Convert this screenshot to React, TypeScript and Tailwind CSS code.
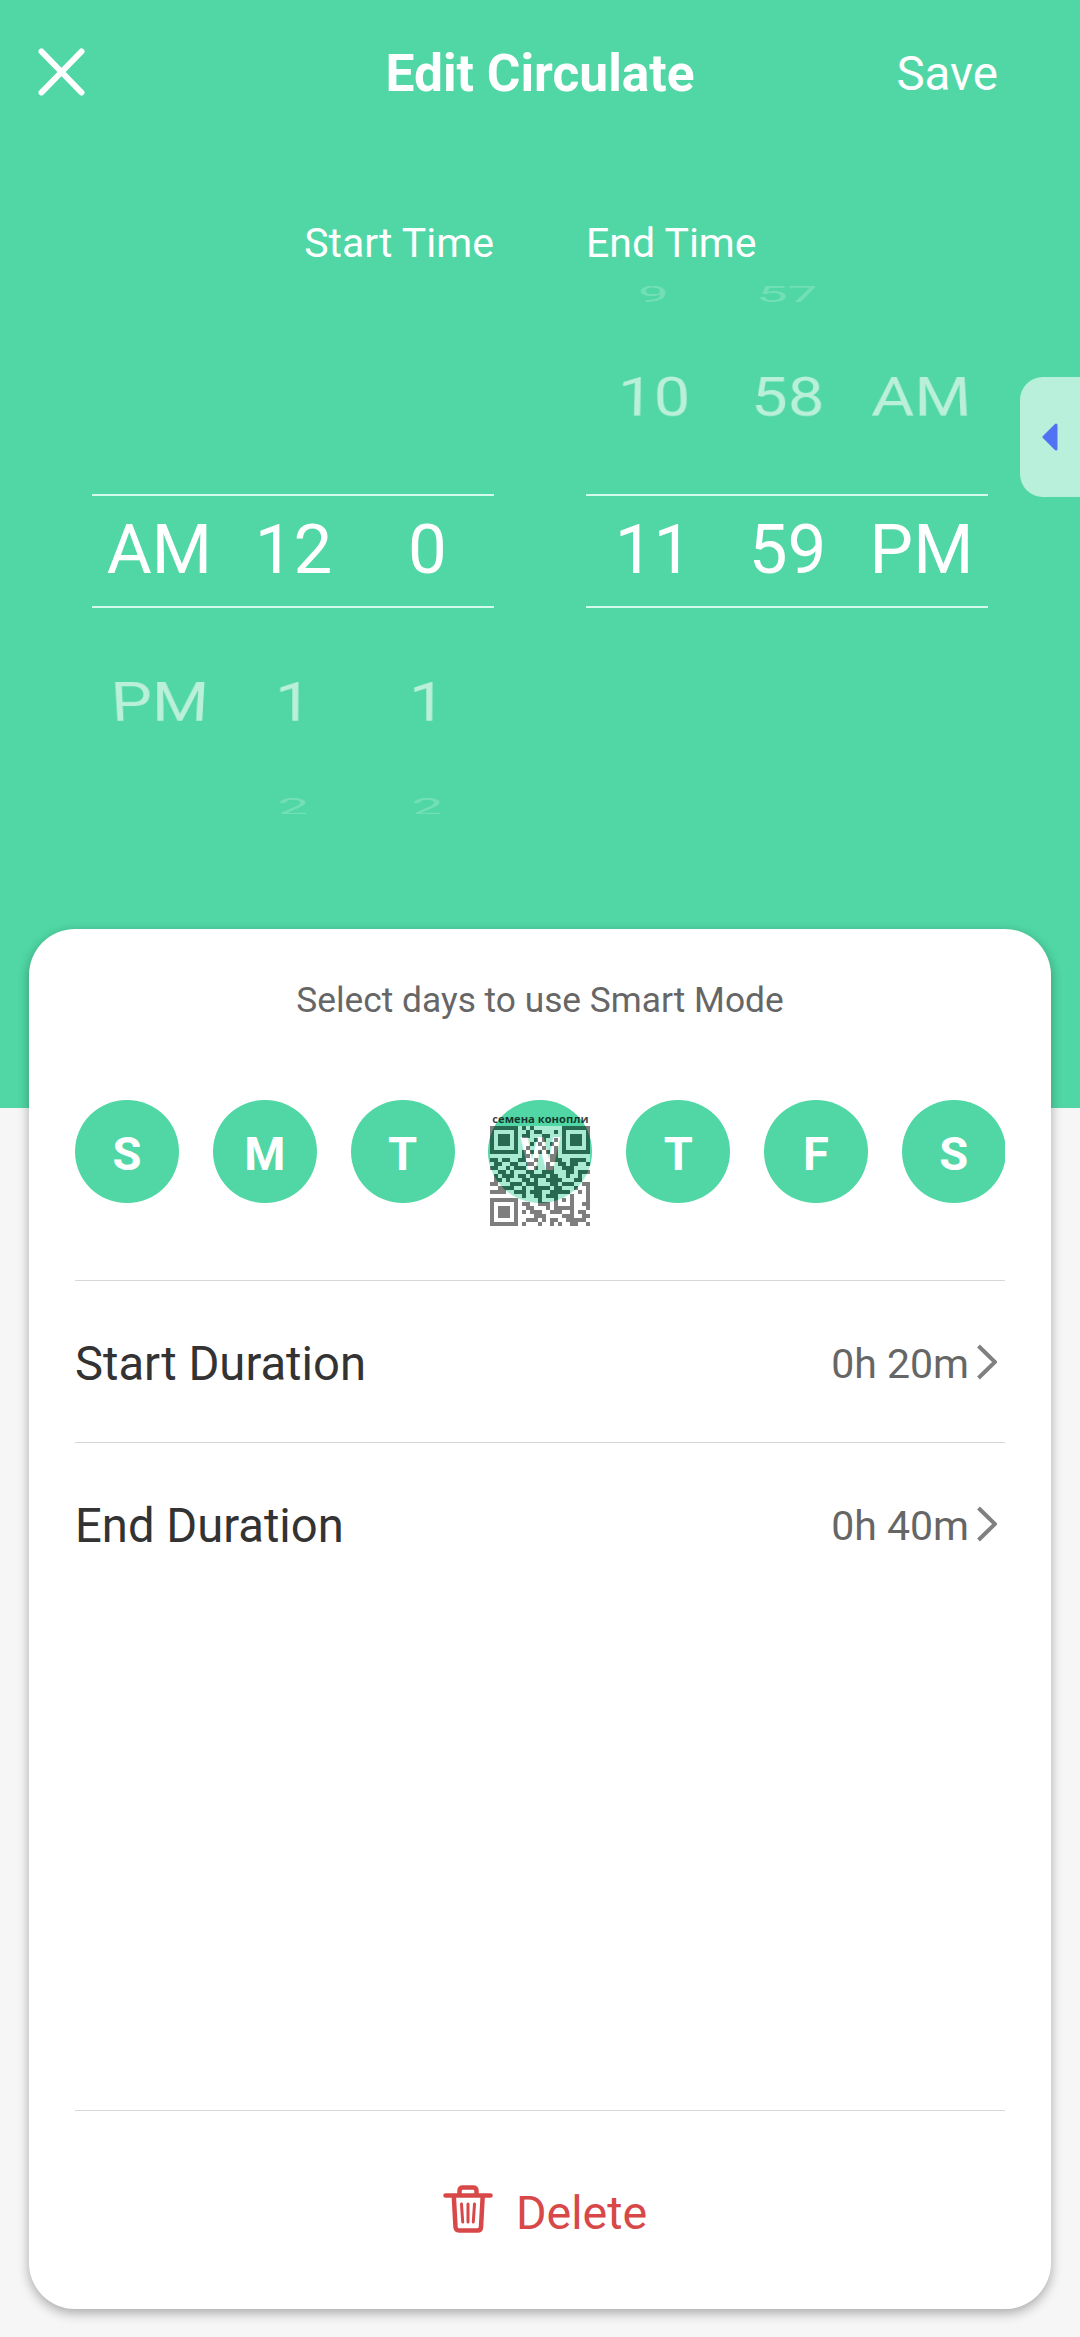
import React from "react";

type WheelProps = { columns: string[][] };

const rowBoxes = ["h-[52px]", "h-[154px]", "h-[151px]", "h-[155px]", "h-[53px]"];

const rowStyles = [
  "opacity-20 [transform:scale(0.8,0.56)_perspective(400px)_rotateX(55deg)]",
  "opacity-60 [transform:scale(0.94,0.87)_perspective(400px)_rotateX(25deg)]",
  "",
  "opacity-60 [transform:scale(0.94,0.87)_perspective(400px)_rotateX(-25deg)]",
  "opacity-20 [transform:scale(0.8,0.56)_perspective(400px)_rotateX(-55deg)]",
];

function Wheel({ columns }: WheelProps) {
  return (
    <div className="grid w-[402px] grid-cols-3 text-center text-[69px] leading-[80px] text-white">
      {columns.map((values, column) => (
        <div key={column} className="flex flex-col">
          {values.map((value, row) =>
            row === 2 ? (
              <div key={row} className="h-[151px] pt-[20px]">
                <div className="h-[114px] border-y-2 border-[#d3faec] pt-[14px] pl-px">{value}</div>
              </div>
            ) : (
              <div key={row} className={`flex items-center justify-center pl-px ${rowBoxes[row]}`}>
                <span className={rowStyles[row]}>{value}</span>
              </div>
            )
          )}
        </div>
      ))}
    </div>
  );
}

const qrRows = [
  "1111111010100000001111111",
  "1000001001011000101000001",
  "1011101011000110001011101",
  "1011101000010100101011101",
  "1011101000101001001011101",
  "1000001001000100101000001",
  "1111111010101010101111111",
  "0000000011000001100000000",
  "1101100110010001110011110",
  "0110011001100010011011001",
  "1100101110010011001110000",
  "0011010001100111000110111",
  "0101110110111101100100100",
  "0110100011010011110001100",
  "1100011101110001101110011",
  "0011110010011110110001001",
  "1111001110111001111100101",
  "0000000010011011100010001",
  "1111111000001000101010001",
  "1000001011001110100010011",
  "1011101001100010111110001",
  "1011101010111001110010110",
  "1011101000011100001110011",
  "1000001001110101100111110",
  "1111111010001001010011001",
];

function QrCode() {
  return (
    <svg viewBox="0 0 25 25" className="h-[100px] w-[100px]" shapeRendering="crispEdges">
      <rect width="25" height="25" fill="#fff" />
      {qrRows.flatMap((line, y) =>
        line.split("").map((cell, x) =>
          cell === "1" ? <rect key={`${x}-${y}`} x={x} y={y} width="1" height="1" fill="#000" /> : null
        )
      )}
    </svg>
  );
}

function Duration({ label, value }: { label: string; value: string }) {
  return (
    <div className="flex h-[162px] items-center justify-between border-t border-[#d8d8d8] pt-[4px]">
      <span className="text-[47.2px] leading-[60px] text-[#333]">{label}</span>
      <span className="flex items-center pr-[8px]">
        <span className="text-[41px] leading-[60px] text-[#666]">{value}</span>
        <svg viewBox="0 0 20 36" className="mb-[4px] ml-[8px] h-[36px] w-[20px]" fill="none" stroke="#808080" strokeWidth="4">
          <path d="M1.5 2 18 18 1.5 34" />
        </svg>
      </span>
    </div>
  );
}

export default function App() {
  return (
    <div className="flex h-[2337px] w-[1080px] flex-col overflow-hidden bg-[#f6f6f6] font-['Roboto',sans-serif]">
      <div className="relative h-[1108px] shrink-0 bg-[#50d7a5]">
        <header className="grid h-[146px] grid-cols-[320px_1fr_320px] items-center text-white">
          <svg viewBox="0 0 48 48" className="mb-[2px] ml-[38px] h-[48px] w-[48px]" fill="none" stroke="#fff" strokeWidth="6" strokeLinecap="round">
            <path d="M3.5 3.5 43.5 44.5M43.5 3.5 3.5 44.5" />
          </svg>
          <h1 className="whitespace-nowrap pt-px text-center text-[51.5px] font-bold leading-[60px]">Edit Circulate</h1>
          <span className="pr-[82px] pt-[2px] text-right text-[47.5px] leading-[60px]">Save</span>
        </header>
        <div className="flex justify-between pr-[92px] pl-[92px] pt-[68px]">
          <section className="flex flex-col">
            <h2 className="h-[54px] text-right text-[41px] leading-[58px] text-white">Start Time</h2>
            <Wheel
              columns={[
                ["", "", "AM", "PM", ""],
                ["", "", "12", "1", "2"],
                ["", "", "0", "1", "2"],
              ]}
            />
          </section>
          <section className="flex flex-col">
            <h2 className="h-[54px] text-[41px] leading-[58px] text-white">End Time</h2>
            <Wheel
              columns={[
                ["9", "10", "11", "", ""],
                ["57", "58", "59", "", ""],
                ["", "AM", "PM", "", ""],
              ]}
            />
          </section>
        </div>
        <div className="absolute right-0 top-[377px] flex h-[120px] w-[60px] items-center rounded-l-[23px] bg-[#b9f0dc] pl-[22px]">
          <svg viewBox="0 0 16 28" className="h-[28px] w-[16px]">
            <path d="M14 2v24L2 14Z" fill="#4f73f3" stroke="#4f73f3" strokeWidth="3" strokeLinejoin="round" />
          </svg>
        </div>
      </div>

      <main className="relative mx-[29px] -mt-[179px] flex h-[1380px] shrink-0 flex-col rounded-[46px] bg-white px-[46px] shadow-[0_4px_12px_rgba(0,0,0,0.32)]">
        <p className="mt-[46px] text-center text-[35.3px] leading-[50px] text-[#666]">Select days to use Smart Mode</p>
        <div className="mt-[75px] flex h-[180px] gap-[33.8px] overflow-hidden text-[47px] font-bold leading-[60px] text-white">
          {["S", "M", "T", "W", "T", "F", "S"].map((day, i) => (
            <div key={i} className="relative flex h-[103px] w-[104px] shrink-0 items-center justify-center rounded-full bg-[#50d7a5] pt-[4px]">
              {day}
              {i === 3 && (
                <div className="absolute left-[2px] top-[11px] flex flex-col">
                  <span className="flex h-[15px] w-[100px] items-center justify-center whitespace-nowrap font-['Open_Sans'] text-[11.2px] font-bold leading-[15px] text-black/75">
                    семена конопли
                  </span>
                  <div className="opacity-50">
                    <QrCode />
                  </div>
                </div>
              )}
            </div>
          ))}
        </div>
        <Duration label="Start Duration" value="0h 20m" />
        <Duration label="End Duration" value="0h 40m" />
        <div className="mt-auto flex h-[199px] items-center border-t border-[#d8d8d8] pl-[368px] pt-[6px] text-[#d84848]">
          <svg viewBox="0 0 50 48" className="mb-[8px] h-[48px] w-[50px]" fill="none" stroke="currentColor" strokeWidth="4.5" strokeLinecap="round" strokeLinejoin="round">
            <path d="M2.5 10.5H47.5M10.8 11 12.5 42Q12.7 45.500 16 45.500H34.500Q37.800 45.500 38 42L39.700 11" />
            <path d="M16.500 9V6Q16.500 2.500 20 2.500H30Q33.500 2.500 33.500 6V9" />
            <path d="M18.500 19 19.700 37M25 19V37M31.500 19 30.300 37" strokeWidth="3" />
          </svg>
          <span className="ml-[23px] text-[46.6px] leading-[60px]">Delete</span>
        </div>
      </main>
    </div>
  );
}
